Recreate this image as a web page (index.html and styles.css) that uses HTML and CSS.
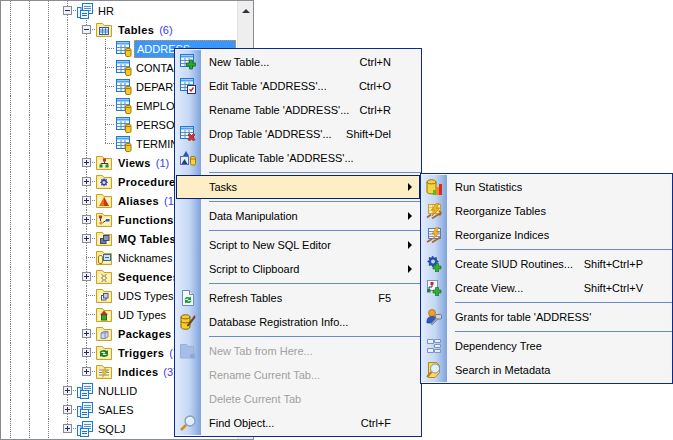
FILE: index.html
```html
<!DOCTYPE html>
<html lang="en">
<head>
<meta charset="utf-8">
<title>Database Explorer</title>
<link rel="stylesheet" href="styles.css">
</head>
<body>
<svg class="defs" aria-hidden="true">
  <defs>
    <symbol id="plus" viewBox="0 0 9 9"><rect x=".5" y=".5" width="8" height="8" fill="#f2f2f4" stroke="#8a8a94"/><path d="M2 4.5h5M4.5 2v5" stroke="#1c2c70"/></symbol>
    <symbol id="minus" viewBox="0 0 9 9"><rect x=".5" y=".5" width="8" height="8" fill="#f2f2f4" stroke="#8a8a94"/><path d="M2 4.5h5" stroke="#1c2c70"/></symbol>
    <symbol id="grid" viewBox="0 0 16 16"><rect x=".5" y=".5" width="13" height="12" fill="#eef6ff" stroke="#1f78d1"/><path d="M1 2.5h12" stroke="#4da3ee" stroke-width="2"/><path d="M1 6.5h12M1 9.500h12M5 4v8M9 4v8" stroke="#5f8fc0"/></symbol>
    <symbol id="cyl" viewBox="0 0 16 16"><rect x="9.500" y="7.500" width="5.500" height="8" rx="1.500" fill="#f6c922" stroke="#a67c00"/><path d="M10 9.500h4.500" stroke="#a67c00"/></symbol>
    <symbol id="schema" viewBox="0 0 16 16"><rect x="5.500" y=".5" width="10" height="10" fill="#eef6ff" stroke="#1f78d1"/><path d="M7 3.500h7M7 5.500h7M7 7.500h7" stroke="#5f8fc0"/><rect x=".5" y="4.500" width="3.500" height="10" fill="#eef6ff" stroke="#1f78d1"/><rect x="3.500" y="7.500" width="8" height="8" fill="#eef6ff" stroke="#1f78d1"/><path d="M5 10.500h5M5 12.500h5" stroke="#2b6fb8"/></symbol>
    <symbol id="table" viewBox="0 0 16 16"><use href="#grid"/><use href="#cyl"/></symbol>
    <symbol id="folder" viewBox="0 0 16 16"><path d="M.5 14.500V1.500h6l1.500 2h7.500v11z" fill="#fdeb9c" stroke="#caa420"/><path d="M2 13V5h12v8z" fill="#fff3c0"/></symbol>
    <symbol id="f-tables" viewBox="0 0 16 16"><use href="#folder"/><rect x="3.500" y="5.500" width="9" height="7" fill="#dcecff" stroke="#2563b0"/><path d="M4 8h8M4 10h8M6.500 6v6M9.500 6v6" stroke="#2563b0" stroke-width=".7"/></symbol>
    <symbol id="f-views" viewBox="0 0 16 16"><use href="#folder"/><rect x="7" y="3.500" width="3" height="3" fill="#d62a1c"/><rect x="3.500" y="9.500" width="3" height="3" fill="#1f8a2a"/><rect x="9.500" y="9.500" width="3" height="3" fill="#1f8a2a"/><path d="M8.500 6.500v2M5 9.500v-1h7v1" fill="none" stroke="#26406e"/></symbol>
    <symbol id="f-proc" viewBox="0 0 16 16"><use href="#folder"/><path d="M8 4l1 1.500 2-.5-.5 2L12 8.500l-1.500 1 .5 2-2-.5-1 1.500-1-1.500-2 .5.500-2L4 8.500 5.500 7 5 5l2 .5z" fill="#2a3cd6"/><circle cx="8" cy="8.500" r="1.500" fill="#f6e36a"/></symbol>
    <symbol id="f-alias" viewBox="0 0 16 16"><use href="#folder"/><path d="M3 13l5-9 5 9z" fill="#ee6a1c"/><path d="M8 4l5 9H8z" fill="#c73a10"/></symbol>
    <symbol id="f-func" viewBox="0 0 16 16"><use href="#folder"/><rect x="3" y="3.500" width="3" height="3" fill="#d62a1c"/><rect x="10" y="7" width="3.500" height="2.500" fill="#2563b0"/><path d="M3 11l2-2 2 2-2 2z" fill="#e98a1c"/><path d="M4.500 6.500V9M7 10.500l3-2" stroke="#26406e" fill="none"/></symbol>
    <symbol id="f-mq" viewBox="0 0 16 16"><use href="#folder"/><rect x="4.500" y="7.500" width="5.500" height="5" fill="#6c78a8" stroke="#3d4670"/><rect x="7.500" y="4.500" width="5.500" height="5" fill="#8a94bc" stroke="#3d4670"/></symbol>
    <symbol id="f-nick" viewBox="0 0 16 16"><use href="#folder"/><rect x="2.500" y="5.500" width="4" height="8" rx="1.500" fill="#fff3c0" stroke="#a67c00"/><rect x="7.500" y="4.500" width="7" height="6" fill="#cfe2fa" stroke="#2b6fb8"/><path d="M9 7.500h4" stroke="#2b6fb8"/></symbol>
    <symbol id="f-seq" viewBox="0 0 16 16"><use href="#folder"/><path d="M5.500 5l2 2-2 2 2 2-2 2M10.500 5l-2 2 2 2-2 2 2 2" fill="none" stroke="#7a6a3c"/></symbol>
    <symbol id="f-uds" viewBox="0 0 16 16"><use href="#folder"/><rect x="5.500" y="7.500" width="4.500" height="4.500" fill="#f2f2f8" stroke="#4a5488"/><rect x="7.500" y="5.500" width="4.500" height="4.500" fill="#c6cce6" stroke="#4a5488"/></symbol>
    <symbol id="f-ud" viewBox="0 0 16 16"><use href="#folder"/><path d="M4 8l4-4.500L12 8z" fill="#d62a1c"/><rect x="5.500" y="8" width="5" height="5" fill="#35b034" stroke="#1a6f1a"/></symbol>
    <symbol id="f-pack" viewBox="0 0 16 16"><use href="#folder"/><path d="M5 7l3-1.500h4V11l-3 1.500H5z" fill="#cfd6ea" stroke="#7e8cb4"/><path d="M5 7h4v5.500M9 7l3-1.500" fill="none" stroke="#7e8cb4"/></symbol>
    <symbol id="f-trig" viewBox="0 0 16 16"><use href="#folder"/><path d="M3.500 7.500C5 4.500 9 4.500 11 6l1-1v4H8l1.500-1.500C8 6.500 6 6.500 5 8z" fill="#16832a"/><path d="M12.500 9.500c-1.500 3-5.500 3-7.500 1.500l-1 1V8h4l-1.500 1.500c1.500 1 3.500 1 4.500-.5z" fill="#16832a"/></symbol>
    <symbol id="f-idx" viewBox="0 0 16 16"><use href="#folder"/><path d="M3 6h10M3 8.500h10M3 11h10" stroke="#7c88b0"/><path d="M9.500 3.500L5.500 9H8l-1.500 4.500L11.500 7H9z" fill="#f5c518" stroke="#c6861a" stroke-width=".5"/></symbol>
    <symbol id="m-new" viewBox="0 0 16 16"><use href="#grid"/><path d="M10 6.500h3v3h3v3h-3v3h-3v-3H7v-3h3z" transform="translate(-.5 -.500)" fill="#2fa531" stroke="#0e6a14" stroke-width=".8"/></symbol>
    <symbol id="m-edit" viewBox="0 0 16 16"><use href="#grid"/><rect x="7.500" y="7.500" width="8" height="8" fill="#fff" stroke="#1d3a70"/><path d="M9.500 11.500l1.500 1.500 2.500-3.500" fill="none" stroke="#d01818" stroke-width="1.300"/></symbol>
    <symbol id="m-drop" viewBox="0 0 16 16"><use href="#grid"/><path d="M8 9l1.500-1.500L11.500 9.500l2-2L15 9l-2 2 2 2.500L13.500 15l-2-2-2 2L8 13.500l2-2.500z" fill="#d8342c" stroke="#8a1a16" stroke-width=".6"/></symbol>
    <symbol id="m-dup" viewBox="0 0 16 16"><rect x=".5" y="6.500" width="8" height="8" fill="#e6eefb" stroke="#5670a8"/><path d="M1.500 14l3-5 3 5z" fill="#1f3e96"/><path d="M3 6l3-5 3 5z" fill="#2a59bd"/><rect x="10.500" y="6.500" width="5" height="8.500" rx="1.500" fill="#f6d24a" stroke="#a67c00"/><path d="M11 9h4" stroke="#a67c00"/></symbol>
    <symbol id="m-refresh" viewBox="0 0 16 16"><path d="M2.500.5h7l4 4v11h-11z" fill="#f3f7ff" stroke="#6d8dbd"/><path d="M9.500.5v4h4" fill="#dbe6f8" stroke="#6d8dbd"/><path d="M4.500 9c1-2.500 4-2.500 5.500-1.500l1-1v3.500H7.500l1-1c-1-.7-2-.5-2.500.5z" fill="#1d9a2c"/><path d="M11.500 11c-1 2.500-4 2.500-5.500 1.500l-1 1V10h3.500l-1 1c1 .7 2 .5 2.500-.5z" fill="#1d9a2c"/></symbol>
    <symbol id="m-db" viewBox="0 0 16 16"><path d="M1 3c0-3 9-3 9 0v10c0 3-9 3-9 0z" fill="#f8cd2a" stroke="#8a6400"/><path d="M1 3c0 2.500 9 2.500 9 0M1 7c0 2.500 9 2.500 9 0" fill="none" stroke="#8a6400"/><path d="M7 11l7-9 1.500 1.500L9 12l-2 .5z" fill="#6a4a24"/><path d="M13.500 2.500l1-1.500 1 1.500-1 1z" fill="#d21c1c"/></symbol>
    <symbol id="m-tab" viewBox="0 0 16 16"><path d="M.5 15V1.500h6L8 3.500h5.500V10l2 5z" fill="#a6bde6" stroke="#98b0dc"/><circle cx="12.500" cy="13" r="2.500" fill="#8ea8d8"/></symbol>
    <symbol id="m-find" viewBox="0 0 16 16"><path d="M1 15l5-5" stroke="#d98a1e" stroke-width="2.500"/><circle cx="10" cy="6" r="5" fill="#dcefff" stroke="#8a9db8" stroke-width="1.300"/><path d="M7.500 5c.5-1.500 2-2 3-2" stroke="#fff" fill="none"/></symbol>
    <symbol id="s-run" viewBox="0 0 16 16"><path d="M1 3c0-3 9-3 9 0v10c0 2.500-9 2.500-9 0z" fill="#f8d43c" stroke="#96700a"/><path d="M1 3c0 2.500 9 2.500 9 0" fill="none" stroke="#96700a"/><rect x="7" y="11" width="3" height="5" fill="#5db53a"/><rect x="10" y="8" width="3" height="8" fill="#ef8a1c"/><rect x="13" y="5" width="3" height="11" fill="#dd2c1c"/></symbol>
    <symbol id="s-rt" viewBox="0 0 16 16"><rect x="2.500" y="1.500" width="12" height="9" fill="#fbe9a0" stroke="#c7a23c"/><path d="M3 4.500h11M3 7.500h11M6.500 2v8M10.500 2v8" stroke="#d4b45a" stroke-width=".7"/><path d="M10.500 0L5.500 7h3L6 13l7.500-7.500h-3L13 0z" fill="#f5b818" stroke="#b9720f" stroke-width=".6"/><path d="M1 14.500l4-3M6 15.500l8-5M13 8l2 2-1.500 2.500" fill="none" stroke="#a0682a" stroke-width="1.600"/></symbol>
    <symbol id="s-ri" viewBox="0 0 16 16"><rect x="2.500" y="1.500" width="12" height="10" fill="#eef3ff" stroke="#6078b8"/><path d="M3 4.500h11M3 7h11M3 9.500h11" stroke="#7c90c8"/><path d="M10.500 0L6 7h3L7 12.500 13.500 5h-3L13 0z" fill="#f5b818" stroke="#b9720f" stroke-width=".5"/><path d="M1 15l5-3M6 15.500l8-5" stroke="#a0682a" stroke-width="1.600"/></symbol>
    <symbol id="s-siud" viewBox="0 0 16 16"><path d="M6.500 0l1.500 2 2.500-.5L10.500 4l2 1.500-2 1.500.5 2.500L8.500 9 7 11 5.500 9 3 9.500 3.500 7l-2-1.500 2-1.500L3 1.500 5.500 2z" fill="#2050b4" stroke="#10306e" stroke-width=".5"/><circle cx="7" cy="5.500" r="2" fill="#bcd8f0"/><path d="M9.500 7.500h3v2.500H15v3h-2.500V16h-3v-3H7v-3h2.500z" fill="#35ad38" stroke="#0e6a14" stroke-width=".6"/></symbol>
    <symbol id="s-view" viewBox="0 0 16 16"><rect x="1.500" y=".5" width="10" height="10" fill="#f4f7fc" stroke="#7d93b8"/><rect x="4.500" y="2" width="3" height="3" fill="#d8261c"/><rect x="1" y="9" width="3.500" height="3.500" fill="#1d8a30"/><path d="M6 5v2H3v2" fill="none" stroke="#26406e"/><path d="M9.500 7.500h3v2.500H15v3h-2.500V16h-3v-3H7v-3h2.500z" fill="#35ad38" stroke="#0e6a14" stroke-width=".6"/></symbol>
    <symbol id="s-grant" viewBox="0 0 16 16"><circle cx="6" cy="4" r="3.500" fill="#f0a028" stroke="#a9630e" stroke-width=".7"/><path d="M1 14c-.5-5 2-6.500 5-6.500S9 8 10 9l-4 5z" fill="#2f5cc0" stroke="#1c3a80" stroke-width=".6"/><rect x="9.500" y="5.500" width="6" height="4.500" rx="1" fill="#cfd2d8" stroke="#737780"/><path d="M10.500 9L5 14.500l1 1.500 6-6" fill="#a4a8b0" stroke="#737780" stroke-width=".7"/></symbol>
    <symbol id="s-dep" viewBox="0 0 16 16"><path d="M1.500 1.500h6v4h-6zM8.500 6.500h6v3h-6zM1.500 10.500h6v4h-6zM8.500 11.500h6v3h-6zM8.500 1.500h6v3h-6z" fill="#e8eefa" stroke="#7e94bf"/><path d="M7.500 3.500h1M7.500 8h1M7.500 13h1" stroke="#7e94bf"/></symbol>
    <symbol id="s-search" viewBox="0 0 16 16"><path d="M2.500.5h8l3 3v7L9 15.500H2.500z" fill="#f8d860" stroke="#b58a16"/><circle cx="9" cy="6.500" r="4.500" fill="#dff0fb" stroke="#7f8fa6"/><path d="M5.500 10L1 15" stroke="#b97c1c" stroke-width="2"/></symbol>
  </defs>
</svg>

<div class="screen">
  <div class="panel">
    <div class="tree">
      <div class="row"><i class="c v"></i><i class="c v"></i><i class="c v"></i><i class="c t"><svg class="exp"><use href="#minus"/></svg></i><svg class="ic"><use href="#schema"/></svg><span class="lb">HR</span></div>
      <div class="row"><i class="c v"></i><i class="c v"></i><i class="c v"></i><i class="c v"></i><i class="c t"><svg class="exp"><use href="#minus"/></svg></i><svg class="ic"><use href="#f-tables"/></svg><b class="lb">Tables</b><span class="cnt">(6)</span></div>
      <div class="row"><i class="c v"></i><i class="c v"></i><i class="c v"></i><i class="c v"></i><i class="c v"></i><i class="c t"></i><svg class="ic leaf"><use href="#table"/></svg><span class="lb sel">ADDRESS</span></div>
      <div class="row"><i class="c v"></i><i class="c v"></i><i class="c v"></i><i class="c v"></i><i class="c v"></i><i class="c t"></i><svg class="ic leaf"><use href="#table"/></svg><span class="lb col">CONTACT</span></div>
      <div class="row"><i class="c v"></i><i class="c v"></i><i class="c v"></i><i class="c v"></i><i class="c v"></i><i class="c t"></i><svg class="ic leaf"><use href="#table"/></svg><span class="lb col">DEPARTMENT</span></div>
      <div class="row"><i class="c v"></i><i class="c v"></i><i class="c v"></i><i class="c v"></i><i class="c v"></i><i class="c t"></i><svg class="ic leaf"><use href="#table"/></svg><span class="lb col">EMPLOYEE</span></div>
      <div class="row"><i class="c v"></i><i class="c v"></i><i class="c v"></i><i class="c v"></i><i class="c v"></i><i class="c t"></i><svg class="ic leaf"><use href="#table"/></svg><span class="lb col">PERSON</span></div>
      <div class="row"><i class="c v"></i><i class="c v"></i><i class="c v"></i><i class="c v"></i><i class="c v"></i><i class="c l"></i><svg class="ic leaf"><use href="#table"/></svg><span class="lb col">TERMINATION</span></div>
      <div class="row"><i class="c v"></i><i class="c v"></i><i class="c v"></i><i class="c v"></i><i class="c t"><svg class="exp"><use href="#plus"/></svg></i><svg class="ic"><use href="#f-views"/></svg><b class="lb">Views</b><span class="cnt">(1)</span></div>
      <div class="row"><i class="c v"></i><i class="c v"></i><i class="c v"></i><i class="c v"></i><i class="c t"><svg class="exp"><use href="#plus"/></svg></i><svg class="ic"><use href="#f-proc"/></svg><b class="lb">Procedures</b></div>
      <div class="row"><i class="c v"></i><i class="c v"></i><i class="c v"></i><i class="c v"></i><i class="c t"><svg class="exp"><use href="#plus"/></svg></i><svg class="ic"><use href="#f-alias"/></svg><b class="lb">Aliases</b><span class="cnt">(1)</span></div>
      <div class="row"><i class="c v"></i><i class="c v"></i><i class="c v"></i><i class="c v"></i><i class="c t"><svg class="exp"><use href="#plus"/></svg></i><svg class="ic"><use href="#f-func"/></svg><b class="lb">Functions</b></div>
      <div class="row"><i class="c v"></i><i class="c v"></i><i class="c v"></i><i class="c v"></i><i class="c t"><svg class="exp"><use href="#plus"/></svg></i><svg class="ic"><use href="#f-mq"/></svg><b class="lb">MQ Tables</b></div>
      <div class="row"><i class="c v"></i><i class="c v"></i><i class="c v"></i><i class="c v"></i><i class="c t"></i><svg class="ic"><use href="#f-nick"/></svg><span class="lb">Nicknames</span></div>
      <div class="row"><i class="c v"></i><i class="c v"></i><i class="c v"></i><i class="c v"></i><i class="c t"><svg class="exp"><use href="#plus"/></svg></i><svg class="ic"><use href="#f-seq"/></svg><b class="lb">Sequences</b></div>
      <div class="row"><i class="c v"></i><i class="c v"></i><i class="c v"></i><i class="c v"></i><i class="c t"></i><svg class="ic"><use href="#f-uds"/></svg><span class="lb">UDS Types</span></div>
      <div class="row"><i class="c v"></i><i class="c v"></i><i class="c v"></i><i class="c v"></i><i class="c t"></i><svg class="ic"><use href="#f-ud"/></svg><span class="lb">UD Types</span></div>
      <div class="row"><i class="c v"></i><i class="c v"></i><i class="c v"></i><i class="c v"></i><i class="c t"><svg class="exp"><use href="#plus"/></svg></i><svg class="ic"><use href="#f-pack"/></svg><b class="lb">Packages</b></div>
      <div class="row"><i class="c v"></i><i class="c v"></i><i class="c v"></i><i class="c v"></i><i class="c t"><svg class="exp"><use href="#plus"/></svg></i><svg class="ic"><use href="#f-trig"/></svg><b class="lb">Triggers</b><span class="cnt">(1)</span></div>
      <div class="row"><i class="c v"></i><i class="c v"></i><i class="c v"></i><i class="c v"></i><i class="c l"><svg class="exp"><use href="#plus"/></svg></i><svg class="ic"><use href="#f-idx"/></svg><b class="lb">Indices</b><span class="cnt">(3)</span></div>
      <div class="row"><i class="c v"></i><i class="c v"></i><i class="c v"></i><i class="c t"><svg class="exp"><use href="#plus"/></svg></i><svg class="ic"><use href="#schema"/></svg><span class="lb">NULLID</span></div>
      <div class="row"><i class="c v"></i><i class="c v"></i><i class="c v"></i><i class="c t"><svg class="exp"><use href="#plus"/></svg></i><svg class="ic"><use href="#schema"/></svg><span class="lb">SALES</span></div>
      <div class="row"><i class="c v"></i><i class="c v"></i><i class="c v"></i><i class="c l"><svg class="exp"><use href="#plus"/></svg></i><svg class="ic"><use href="#schema"/></svg><span class="lb">SQLJ</span></div>
    </div>
    <div class="scrollbar"><span class="arrow-up"></span></div>
  </div>

  <div class="menu main">
    <div class="item"><svg class="mi"><use href="#m-new"/></svg><span class="tx">New Table...</span><span class="key">Ctrl+N</span></div>
    <div class="item"><svg class="mi"><use href="#m-edit"/></svg><span class="tx">Edit Table 'ADDRESS'...</span><span class="key">Ctrl+O</span></div>
    <div class="item"><span class="mi"></span><span class="tx">Rename Table 'ADDRESS'...</span><span class="key">Ctrl+R</span></div>
    <div class="item"><svg class="mi"><use href="#m-drop"/></svg><span class="tx">Drop Table 'ADDRESS'...</span><span class="key">Shift+Del</span></div>
    <div class="item"><svg class="mi"><use href="#m-dup"/></svg><span class="tx">Duplicate Table 'ADDRESS'...</span></div>
    <div class="sep"></div>
    <div class="item active"><span class="mi"></span><span class="tx">Tasks</span><span class="caret"></span></div>
    <div class="sep"></div>
    <div class="item"><span class="mi"></span><span class="tx">Data Manipulation</span><span class="caret"></span></div>
    <div class="sep"></div>
    <div class="item"><span class="mi"></span><span class="tx">Script to New SQL Editor</span><span class="caret"></span></div>
    <div class="item"><span class="mi"></span><span class="tx">Script to Clipboard</span><span class="caret"></span></div>
    <div class="sep"></div>
    <div class="item"><svg class="mi"><use href="#m-refresh"/></svg><span class="tx">Refresh Tables</span><span class="key">F5</span></div>
    <div class="item"><svg class="mi"><use href="#m-db"/></svg><span class="tx">Database Registration Info...</span></div>
    <div class="sep"></div>
    <div class="item off"><svg class="mi"><use href="#m-tab"/></svg><span class="tx">New Tab from Here...</span></div>
    <div class="item off"><span class="mi"></span><span class="tx">Rename Current Tab...</span></div>
    <div class="item off"><span class="mi"></span><span class="tx">Delete Current Tab</span></div>
    <div class="item"><svg class="mi"><use href="#m-find"/></svg><span class="tx">Find Object...</span><span class="key">Ctrl+F</span></div>
  </div>

  <div class="menu sub">
    <div class="item"><svg class="mi"><use href="#s-run"/></svg><span class="tx">Run Statistics</span></div>
    <div class="item"><svg class="mi"><use href="#s-rt"/></svg><span class="tx">Reorganize Tables</span></div>
    <div class="item"><svg class="mi"><use href="#s-ri"/></svg><span class="tx">Reorganize Indices</span></div>
    <div class="sep"></div>
    <div class="item"><svg class="mi"><use href="#s-siud"/></svg><span class="tx">Create SIUD Routines...</span><span class="key">Shift+Ctrl+P</span></div>
    <div class="item"><svg class="mi"><use href="#s-view"/></svg><span class="tx">Create View...</span><span class="key">Shift+Ctrl+V</span></div>
    <div class="sep"></div>
    <div class="item"><svg class="mi"><use href="#s-grant"/></svg><span class="tx">Grants for table 'ADDRESS'</span></div>
    <div class="sep"></div>
    <div class="item"><svg class="mi"><use href="#s-dep"/></svg><span class="tx">Dependency Tree</span></div>
    <div class="item"><svg class="mi"><use href="#s-search"/></svg><span class="tx">Search in Metadata</span></div>
  </div>
</div>
</body>
</html>
```

FILE: styles.css
```css
html, body {
  margin: 0;
  padding: 0;
  background: #fff;
}
.defs {
  display: none;
}
.screen {
  position: relative;
  width: 673px;
  height: 440px;
  overflow: hidden;
  font-family: "Liberation Sans", Arial, sans-serif;
  font-size: 11px;
  color: #000;
}
.panel {
  display: flex;
  width: 254px;
  height: 440px;
  box-sizing: border-box;
  border: 1px solid #888d94;
  background: #fff;
}
.tree {
  flex: 1;
  min-width: 0;
  overflow: hidden;
}
.scrollbar {
  width: 16px;
  background: #eee;
  border-left: 1px solid #e2e2e2;
  box-sizing: border-box;
  display: flex;
  justify-content: center;
  align-items: flex-start;
  padding-top: 8px;
}
.arrow-up {
  width: 0;
  height: 0;
  border-left: 4px solid transparent;
  border-right: 4px solid transparent;
  border-bottom: 4px solid #333;
}
.row {
  display: flex;
  align-items: center;
  height: 19px;
  white-space: nowrap;
}
.c {
  flex: none;
  display: flex;
  align-items: center;
  width: 19px;
  height: 19px;
  background-repeat: no-repeat;
}
.v {
  background-image: repeating-linear-gradient(to bottom, #808080 0 1px, transparent 1px 2px);
  background-size: 1px 100%;
  background-position: 9px 0;
}
.t {
  background-image:
    repeating-linear-gradient(to bottom, #808080 0 1px, transparent 1px 2px),
    repeating-linear-gradient(to right, #808080 0 1px, transparent 1px 2px);
  background-size: 1px 100%, 10px 1px;
  background-position: 9px 0, 9px 9px;
}
.l {
  background-image:
    repeating-linear-gradient(to bottom, #808080 0 1px, transparent 1px 2px),
    repeating-linear-gradient(to right, #808080 0 1px, transparent 1px 2px);
  background-size: 1px 10px, 10px 1px;
  background-position: 9px 0, 9px 9px;
}
.exp {
  display: block;
  width: 9px;
  height: 9px;
  margin-left: 5px;
}
.ic {
  flex: none;
  width: 16px;
  height: 16px;
  margin-right: 5px;
}
.c + .c + .c + .c + .c + .ic:not(.leaf) {
  margin-right: 6px;
}
.ic.leaf {
  margin-left: 1px;
  margin-right: 2px;
}
.lb {
  line-height: 15px;
  padding-top: 1px;
}
b.lb {
  letter-spacing: .35px;
}
.col {
  padding-left: 2px;
}
.sel {
  flex: none;
  box-sizing: border-box;
  width: 102px;
  height: 18px;
  padding: 0 0 0 2px;
  line-height: 16px;
  background: #3b96fb;
  border: 1px dotted #e8902c;
  color: #fff;
}
.cnt {
  margin-left: 5px;
  padding-top: 1px;
  color: #3a3af0;
}
.menu {
  position: absolute;
  box-sizing: border-box;
  padding: 1px 0;
  border: 1px solid #0a2a8c;
  background-color: #f5f5f5;
  background-image: linear-gradient(to right, #e2ecfc, #c4d7f4 55%, #7fa3dc);
  background-repeat: no-repeat;
  background-size: 26px calc(100% - 2px);
  background-position: 0 1px;
}
.main {
  left: 174px;
  top: 48px;
  width: 248px;
  height: 389px;
}
.sub {
  left: 420px;
  top: 173px;
  width: 253px;
  height: 211px;
}
.item {
  display: flex;
  align-items: center;
  height: 24px;
  box-sizing: border-box;
  padding-left: 5px;
  padding-right: 30px;
  white-space: nowrap;
}
.sub .item {
  padding-right: 29px;
}
.mi {
  flex: none;
  display: block;
  width: 16px;
  height: 16px;
  margin-right: 13px;
}
.tx {
  flex: 1;
}
.key {
  flex: none;
}
.off {
  color: #a0a0a0;
}
.item:has(.caret) {
  padding-right: 9px;
}
.item.active {
  margin: 0 1px;
  padding-left: 3px;
  padding-right: 7px;
  background: #fdeec6;
  border: 1px solid #0a1f78;
}
.caret {
  flex: none;
  width: 0;
  height: 0;
  border-top: 4px solid transparent;
  border-bottom: 4px solid transparent;
  border-left: 4px solid #000;
}
.sep {
  height: 1px;
  margin: 2px 0 2px 34px;
  background: #6a8bcb;
}
```
